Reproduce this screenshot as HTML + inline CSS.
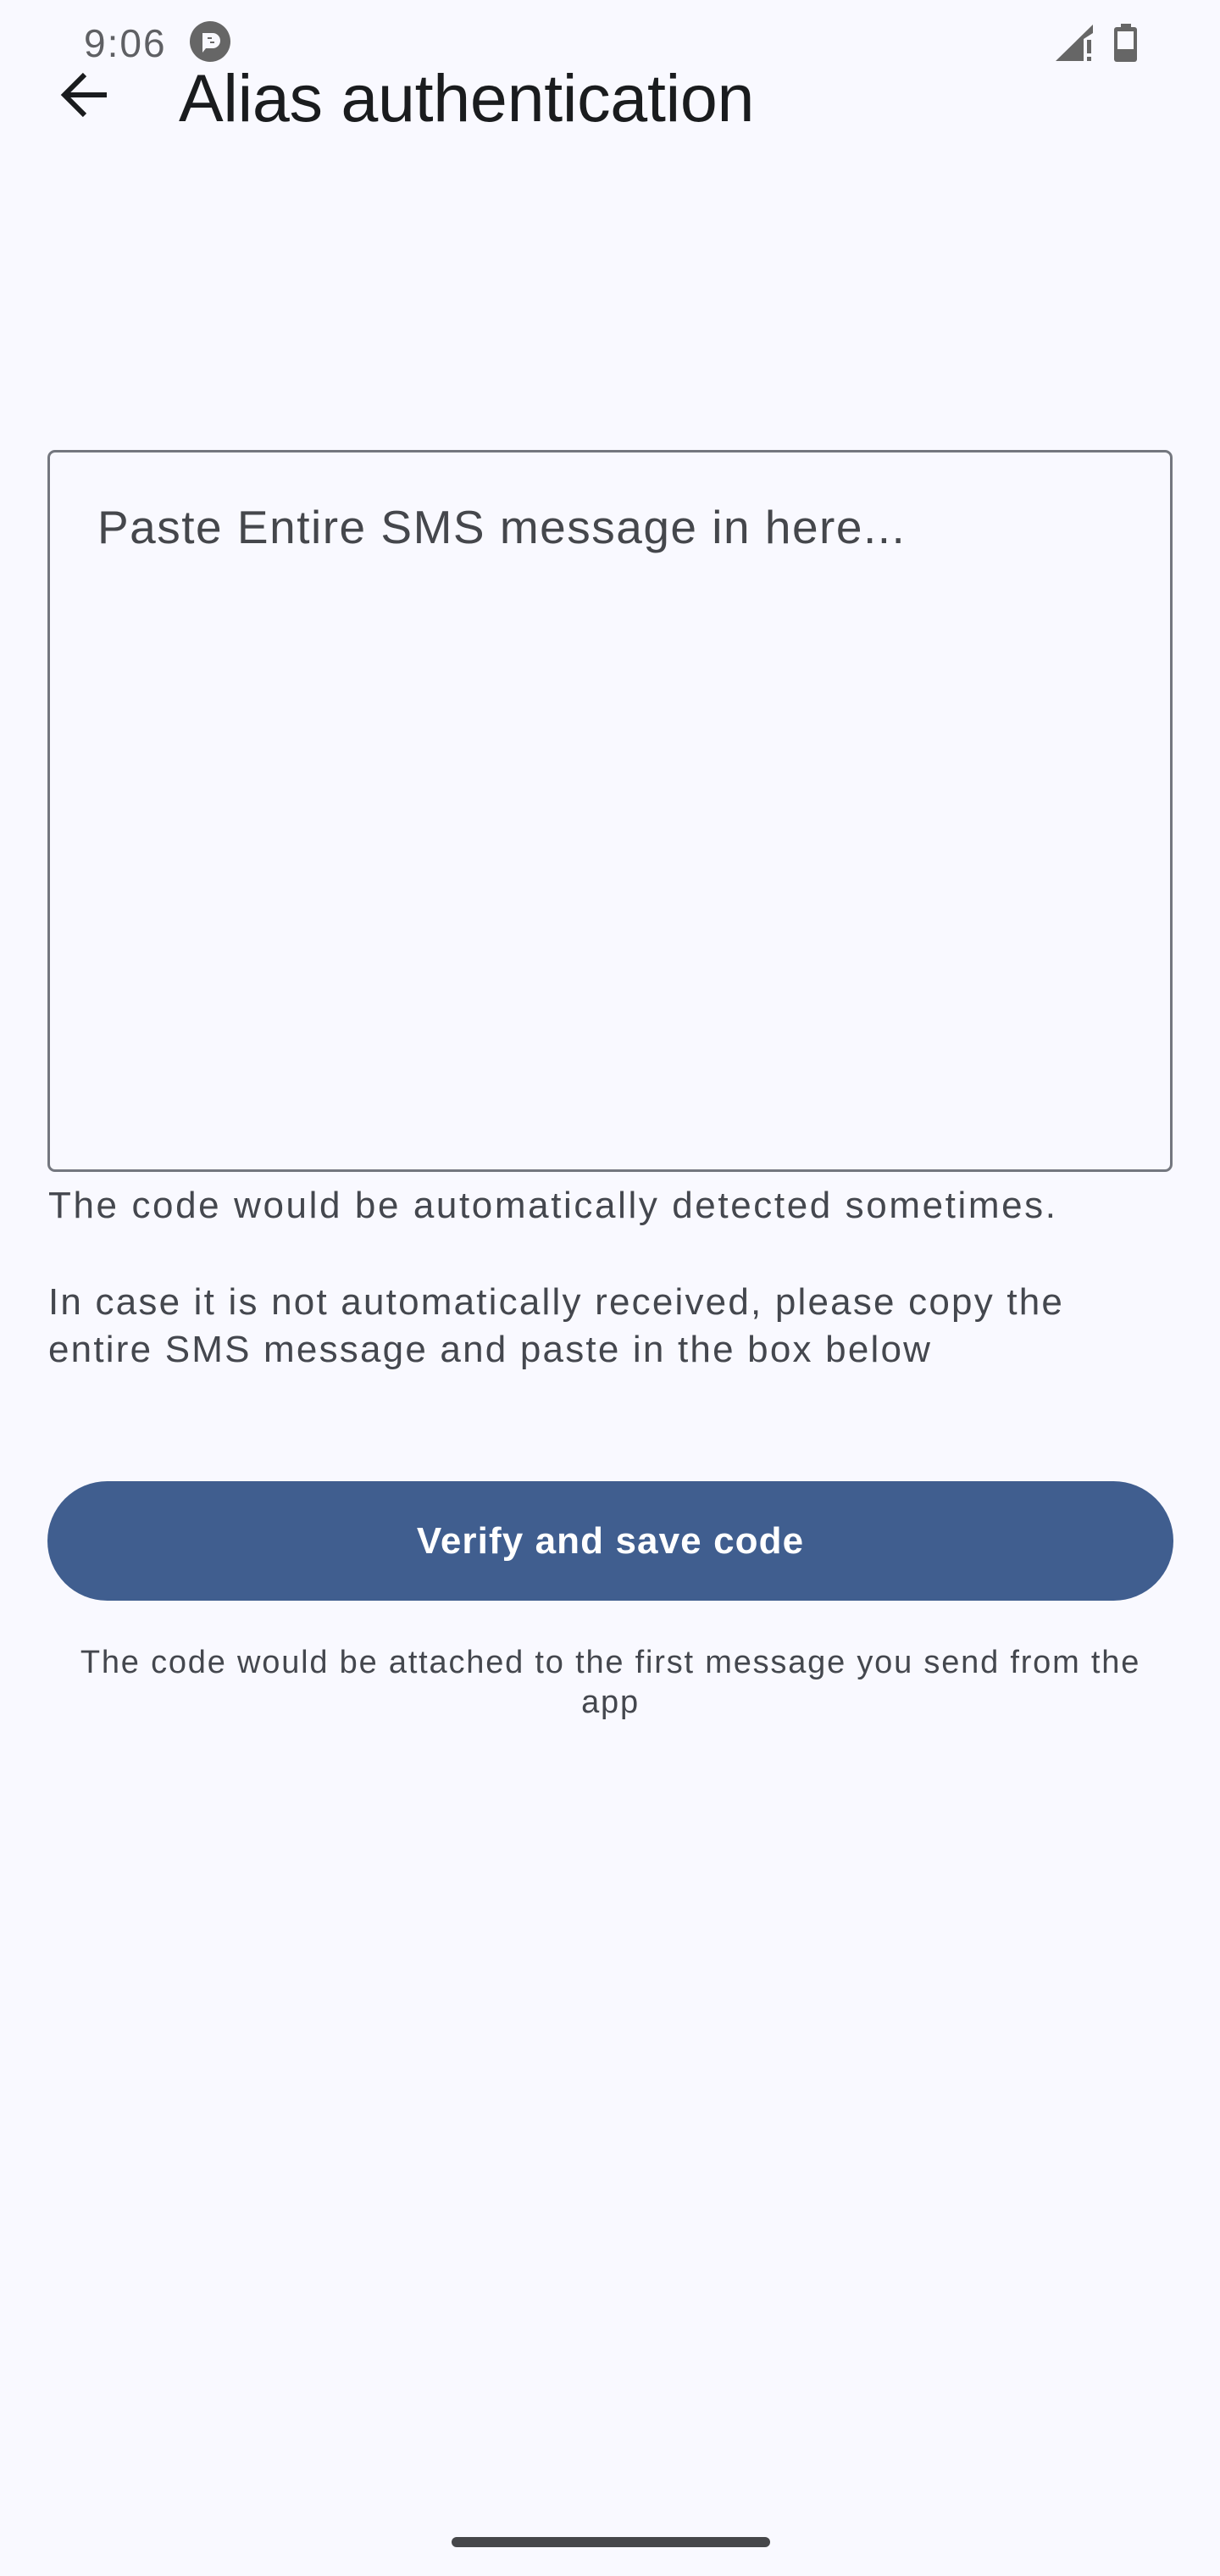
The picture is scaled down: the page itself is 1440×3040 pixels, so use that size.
<!DOCTYPE html>
<html><head><meta charset="utf-8"><style>
html,body{margin:0;padding:0}
body{width:1440px;height:3040px;background:#f9f9ff;position:relative;overflow:hidden;font-family:"Liberation Sans",sans-serif}
.a{position:absolute;white-space:nowrap}
</style></head><body>
<div class="a" style="left:99px;top:28px;font-size:46px;line-height:46px;color:#5f6064;letter-spacing:2px">9:06</div>
<svg class="a" style="left:224px;top:25px" width="48" height="48" viewBox="0 0 48 48"><circle cx="24" cy="24" r="24" fill="#666"/><path d="M15 14h12a9 9 0 0 1 0 18h-8l-4 5z" fill="#f9f9ff"/><path d="M21 20h5M24 25h5" stroke="#666" stroke-width="2"/></svg>
<svg class="a" style="left:1246px;top:29px" width="46" height="44" viewBox="0 0 46 44"><path d="M0 43L44 0V10L33 17V43Z" fill="#666"/><rect x="37" y="18" width="5" height="16" fill="#666"/><rect x="37" y="38" width="5" height="5" fill="#666"/></svg>
<svg class="a" style="left:1315px;top:28px" width="28" height="46" viewBox="0 0 28 46"><rect x="8" y="0" width="12" height="5" fill="#666"/><rect x="0" y="4" width="27" height="41" rx="3" fill="#666"/><rect x="4" y="9" width="19" height="21" fill="#f9f9ff"/></svg>
<svg class="a" style="left:68px;top:82px" width="62" height="62" viewBox="0 0 62 62"><path d="M58 30H10M32 6L8 30l24 24" fill="none" stroke="#1a1c1e" stroke-width="6"/></svg>
<div class="a" style="left:211px;top:76px;font-size:79px;line-height:79px;color:#1a1c1e;letter-spacing:-0.3px">Alias authentication</div>
<div class="a" style="left:56px;top:531px;width:1322px;height:846px;border:3px solid #74777f;border-radius:9px"></div>
<div class="a" style="left:115px;top:595px;font-size:55px;line-height:55px;color:#45474c;letter-spacing:1.5px">Paste Entire SMS message in here...</div>
<div class="a" style="left:57px;top:1401px;font-size:44px;line-height:44px;color:#44474e;letter-spacing:2.6px">The code would be automatically detected sometimes.</div>
<div class="a" style="left:57px;top:1509px;font-size:44px;line-height:56px;color:#44474e;letter-spacing:2.2px">In case it is not automatically received, please copy the<br>entire SMS message and paste in the box below</div>
<div class="a" style="left:56px;top:1748px;width:1329px;height:141px;border-radius:71px;background:#405e8f;color:#fff;font-size:44px;font-weight:bold;line-height:141px;text-align:center;letter-spacing:1.1px">Verify and save code</div>
<div class="a" style="left:56px;top:1939px;width:1329px;font-size:38px;line-height:47px;color:#44474e;text-align:center;white-space:normal;letter-spacing:1.8px">The code would be attached to the first message you send from the<br>app</div>
<div class="a" style="left:533px;top:2994px;width:376px;height:12px;border-radius:6px;background:#46474a"></div>
</body></html>
